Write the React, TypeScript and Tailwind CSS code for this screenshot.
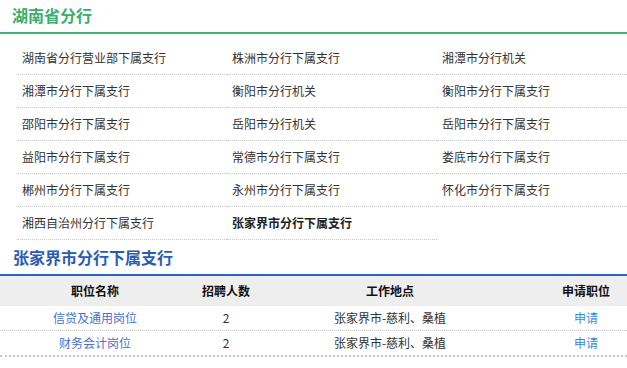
import React from "react";

const branches: { name: string; bold?: boolean }[] = [
  { name: "湖南省分行营业部下属支行" },
  { name: "株洲市分行下属支行" },
  { name: "湘潭市分行机关" },
  { name: "湘潭市分行下属支行" },
  { name: "衡阳市分行机关" },
  { name: "衡阳市分行下属支行" },
  { name: "邵阳市分行下属支行" },
  { name: "岳阳市分行机关" },
  { name: "岳阳市分行下属支行" },
  { name: "益阳市分行下属支行" },
  { name: "常德市分行下属支行" },
  { name: "娄底市分行下属支行" },
  { name: "郴州市分行下属支行" },
  { name: "永州市分行下属支行" },
  { name: "怀化市分行下属支行" },
  { name: "湘西自治州分行下属支行" },
  { name: "张家界市分行下属支行", bold: true },
];

const jobs = [
  { title: "信贷及通用岗位", count: "2", place: "张家界市-慈利、桑植" },
  { title: "财务会计岗位", count: "2", place: "张家界市-慈利、桑植" },
];

export default function App() {
  return (
    <div
      className="w-[627px] h-[368px] overflow-hidden bg-white text-[#333] text-[12px]"
      style={{ fontFamily: '"Noto Sans CJK SC", "Microsoft YaHei", sans-serif' }}
    >
      <div className="h-[34px] flex items-center pl-[12px] pb-[2px] border-b-2 border-[#3fb47a]">
        <span className="text-[16px] font-bold text-[#3aad6d] leading-none">湖南省分行</span>
      </div>
      <div className="ml-[17px] mt-[8px] grid grid-cols-[210px_210px_210px] w-[630px]">
        {branches.map((b) => (
          <div
            key={b.name}
            className={`h-[33px] flex items-center pl-[5px] border-b border-dotted border-[#c8c8c8] whitespace-nowrap ${
              b.bold ? "font-bold text-[#222]" : ""
            }`}
          >
            {b.name}
          </div>
        ))}
      </div>
      <div className="h-[36px] flex items-center pl-[13px] border-b-2 border-[#2d62bf]">
        <span className="text-[16px] font-bold text-[#2b5cb5] leading-none">张家界市分行下属支行</span>
      </div>
      <div className="w-[627px]">
        <div className="h-[30px] bg-[#eeeeee] flex items-center font-bold text-[#111]">
          <div className="w-[190px] text-center">职位名称</div>
          <div className="w-[72px] text-center">招聘人数</div>
          <div className="w-[256px] text-center">工作地点</div>
          <div className="w-[109px] pl-[27px] text-center">申请职位</div>
        </div>
        {jobs.map((j, i) => (
          <div
            key={j.title}
            className={`flex items-center border-dotted border-[#c8c8c8] ${
              i === jobs.length - 1 ? "h-[26px] border-b-2" : "h-[25px] border-b"
            }`}
          >
            <div className="w-[190px] text-center text-[#4a6fd6]">{j.title}</div>
            <div className="w-[72px] text-center">{j.count}</div>
            <div className="w-[256px] text-center">{j.place}</div>
            <div className="w-[109px] pl-[27px] text-center text-[#3a86e6]">申请</div>
          </div>
        ))}
      </div>
    </div>
  );
}
